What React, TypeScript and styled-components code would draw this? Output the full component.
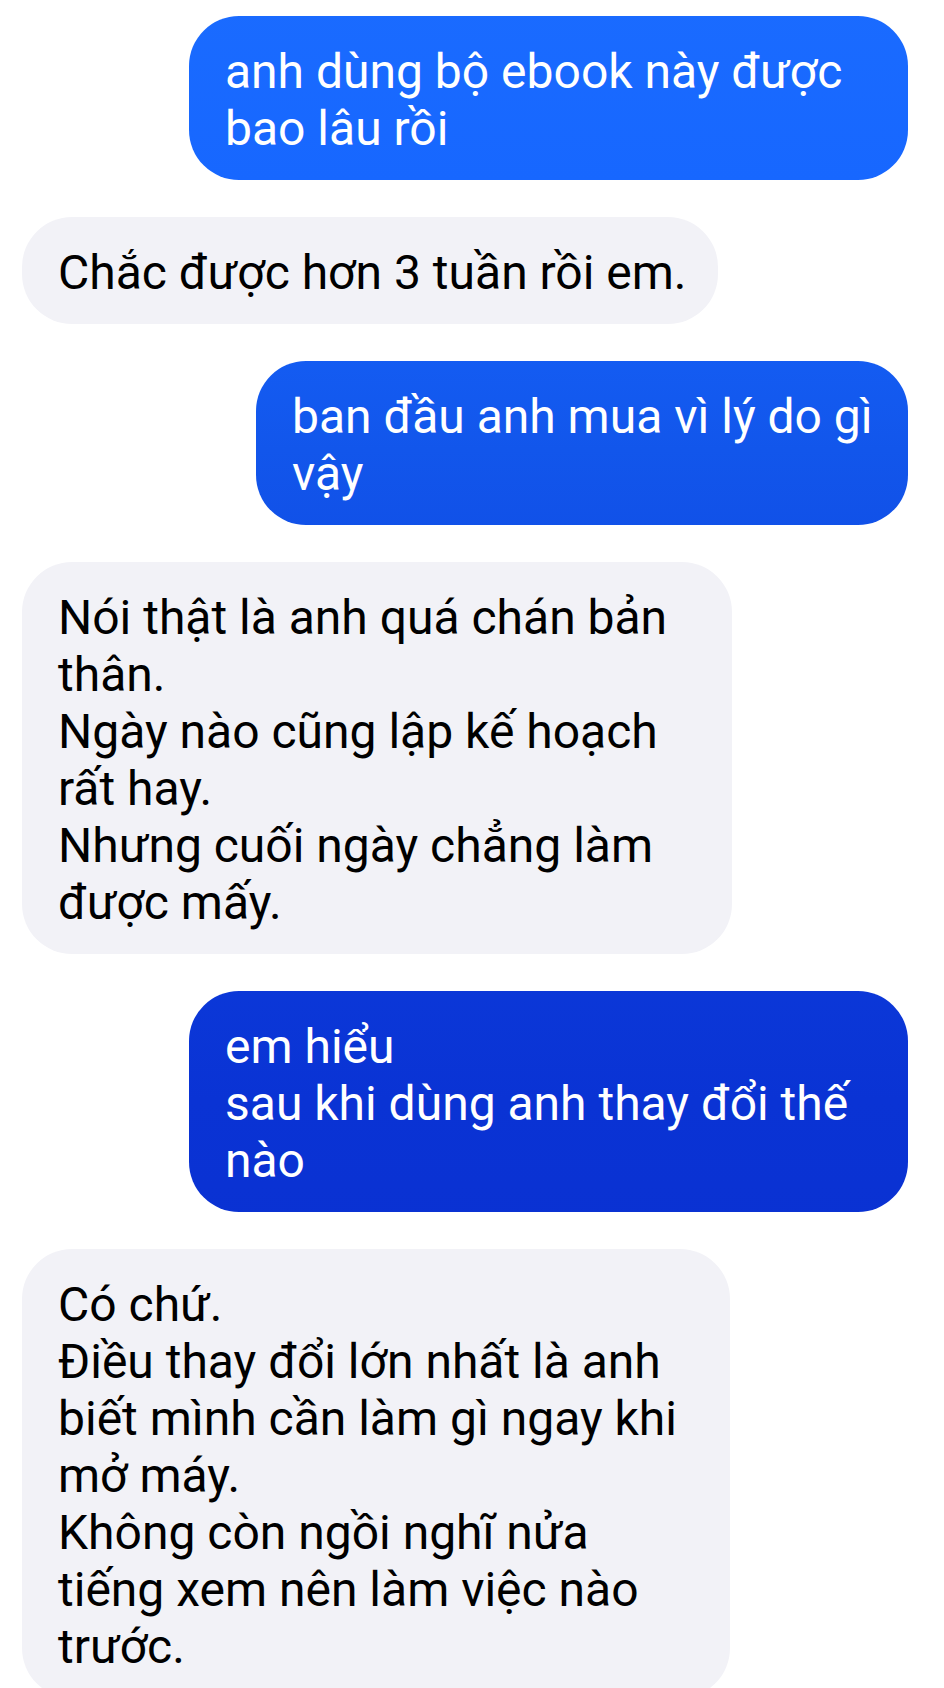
import React from "react";
import styled, { createGlobalStyle, css } from "styled-components";

const GlobalStyle = createGlobalStyle`
  html, body {
    margin: 0;
    padding: 0;
    background: #ffffff;
  }
  body {
    font-family: Roboto, "Noto Sans", "Liberation Sans", sans-serif;
    -webkit-font-smoothing: antialiased;
  }
`;

const Screen = styled.div`
  width: 944px;
  height: 1688px;
  overflow: hidden;
  background: #ffffff;
`;

const Thread = styled.div`
  display: flex;
  flex-direction: column;
  gap: 37px;
  padding: 16px 36px 0 22px;
`;

const Bubble = styled.div<{ $out?: boolean; $width: number }>`
  box-sizing: border-box;
  width: ${(p) => p.$width}px;
  padding: 27px 30px 23px 36px;
  border-radius: 50px;
  font-size: 48px;
  line-height: 57px;
  font-weight: 400;
  letter-spacing: 0;
  ${(p) =>
    p.$out
      ? css`
          align-self: flex-end;
          color: #ffffff;
          background: linear-gradient(
              180deg,
              #1a6bff 0px,
              #1767ff 180px,
              #1256eb 450px,
              #0d3fde 800px,
              #0a33d4 1100px,
              #0a2ccd 1688px
            )
            fixed;
        `
      : css`
          align-self: flex-start;
          color: #000000;
          background: #f2f2f7;
        `}
`;

const Line = styled.span`
  display: block;
  white-space: nowrap;
`;

type Msg = { out?: boolean; width: number; lines: string[] };

const messages: Msg[] = [
  { out: true, width: 719, lines: ["anh dùng bộ ebook này được", "bao lâu rồi"] },
  { width: 696, lines: ["Chắc được hơn 3 tuần rồi em."] },
  { out: true, width: 652, lines: ["ban đầu anh mua vì lý do gì", "vậy"] },
  {
    width: 710,
    lines: [
      "Nói thật là anh quá chán bản",
      "thân.",
      "Ngày nào cũng lập kế hoạch",
      "rất hay.",
      "Nhưng cuối ngày chẳng làm",
      "được mấy.",
    ],
  },
  { out: true, width: 719, lines: ["em hiểu", "sau khi dùng anh thay đổi thế", "nào"] },
  {
    width: 708,
    lines: [
      "Có chứ.",
      "Điều thay đổi lớn nhất là anh",
      "biết mình cần làm gì ngay khi",
      "mở máy.",
      "Không còn ngồi nghĩ nửa",
      "tiếng xem nên làm việc nào",
      "trước.",
    ],
  },
];

export default function App() {
  return (
    <Screen>
      <GlobalStyle />
      <Thread>
        {messages.map((m, i) => (
          <Bubble key={i} $out={m.out} $width={m.width}>
            {m.lines.map((l, j) => (
              <Line key={j}>{l}</Line>
            ))}
          </Bubble>
        ))}
      </Thread>
    </Screen>
  );
}
